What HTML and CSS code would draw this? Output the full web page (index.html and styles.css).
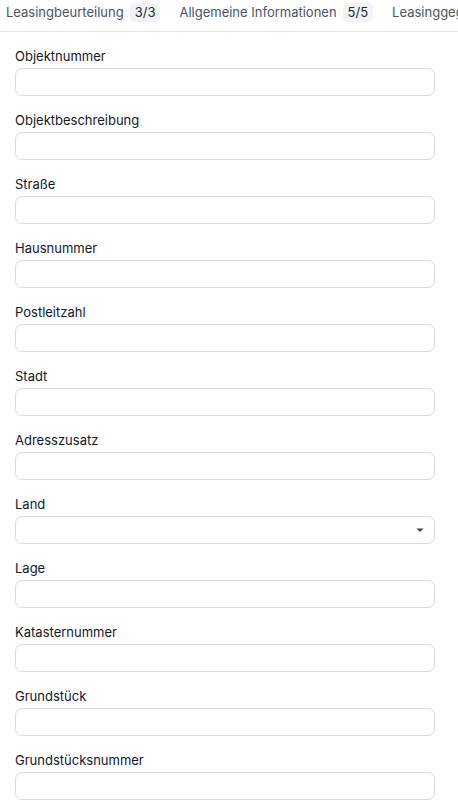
FILE: index.html
```html
<!DOCTYPE html>
<html lang="de">
<head>
<meta charset="utf-8">
<link rel="stylesheet" href="styles.css">
</head>
<body>
<nav class="tabs">
  <div class="tab">Leasingbeurteilung <span class="badge">3/3</span></div>
  <div class="tab">Allgemeine Informationen <span class="badge">5/5</span></div>
  <div class="tab">Leasinggegenstand</div>
</nav>
<form class="form">
  <div class="field"><label>Objektnummer</label><div class="input"></div></div>
  <div class="field"><label>Objektbeschreibung</label><div class="input"></div></div>
  <div class="field"><label>Straße</label><div class="input"></div></div>
  <div class="field"><label>Hausnummer</label><div class="input"></div></div>
  <div class="field"><label>Postleitzahl</label><div class="input"></div></div>
  <div class="field"><label>Stadt</label><div class="input"></div></div>
  <div class="field"><label>Adresszusatz</label><div class="input"></div></div>
  <div class="field"><label>Land</label><div class="input select"><svg class="caret" width="8" height="4" viewBox="0 0 8 4"><path d="M0.5 0.5h7L4 4z" fill="#3b4656"/></svg></div></div>
  <div class="field"><label>Lage</label><div class="input"></div></div>
  <div class="field"><label>Katasternummer</label><div class="input"></div></div>
  <div class="field"><label>Grundstück</label><div class="input"></div></div>
  <div class="field"><label>Grundstücksnummer</label><div class="input"></div></div>
</form>
</body>
</html>
```
FILE: styles.css
```css
* { box-sizing: border-box; }
html, body { margin: 0; padding: 0; background: #fff; overflow: hidden; }
body { font-family: Inter, "Noto Sans", sans-serif; width: 458px; }
.tabs {
  display: flex;
  gap: 19px;
  height: 32px;
  padding: 3px 0 0 6px;
  border-bottom: 1px solid #e5e7eb;
  white-space: nowrap;
  overflow: hidden;
}
.tab {
  display: flex;
  align-items: flex-start;
  gap: 6px;
  font-size: 13px;
  line-height: 19px;
  color: #4b5563;
  flex: none;
}
.badge {
  background: #f1f3f6;
  color: #1f2937;
  border-radius: 5px;
  padding: 0 5px;
  font-size: 13px;
  line-height: 19px;
}
.form {
  display: flex;
  flex-direction: column;
  gap: 14px;
  padding: 14px 23px 0 15px;
}
.field { display: flex; flex-direction: column; gap: 2px; }
label {
  font-size: 13px;
  line-height: 20px;
  color: #111827;
}
.input {
  height: 28px;
  border: 1px solid #d8dbe1;
  border-radius: 7px;
  background: #fff;
}
.select {
  display: flex;
  align-items: center;
  justify-content: flex-end;
  padding-right: 10px;
}
```
